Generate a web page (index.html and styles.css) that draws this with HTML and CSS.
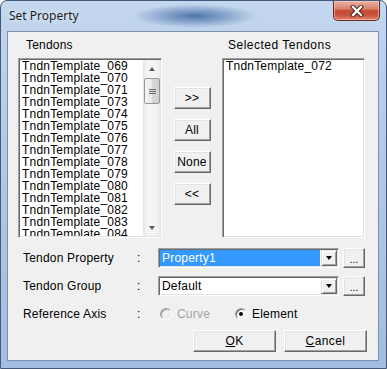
FILE: index.html
```html
<!DOCTYPE html>
<html lang="en">

<head>
    <meta charset="UTF-8" />
    <title>Set Property</title>
    <link rel="stylesheet" href="styles.css">
</head>

<body>
    <div class="window">
        <div class="titlebar">
            <span class="title">Set Property</span>
            <button type="button" class="close">
                <svg width="14" height="12" viewBox="0 0 14 12">
                    <path d="M3 2 L11 10 M11 2 L3 10" stroke="#3b1a16" stroke-width="4.2" stroke-linecap="square" fill="none" />
                    <path d="M3 2 L11 10 M11 2 L3 10" stroke="#fff" stroke-width="2.4" stroke-linecap="square" fill="none" />
                </svg>
            </button>
        </div>

        <div class="client">
            <div class="picker">
                <div class="pane">
                    <div class="caption caption-left">Tendons</div>
                    <div class="listbox">
                        <ul class="items">
                            <li>TndnTemplate_069</li>
                            <li>TndnTemplate_070</li>
                            <li>TndnTemplate_071</li>
                            <li>TndnTemplate_073</li>
                            <li>TndnTemplate_074</li>
                            <li>TndnTemplate_075</li>
                            <li>TndnTemplate_076</li>
                            <li>TndnTemplate_077</li>
                            <li>TndnTemplate_078</li>
                            <li>TndnTemplate_079</li>
                            <li>TndnTemplate_080</li>
                            <li>TndnTemplate_081</li>
                            <li>TndnTemplate_082</li>
                            <li>TndnTemplate_083</li>
                            <li>TndnTemplate_084</li>
                        </ul>
                        <div class="scrollbar">
                            <span class="arrow"><span class="tri-up"></span></span>
                            <span class="thumb"><span class="grip"></span></span>
                            <span class="track"></span>
                            <span class="arrow"><span class="tri-down"></span></span>
                        </div>
                    </div>
                </div>

                <div class="movers">
                    <button type="button" class="btn mover">&gt;&gt;</button>
                    <button type="button" class="btn mover">All</button>
                    <button type="button" class="btn mover">None</button>
                    <button type="button" class="btn mover">&lt;&lt;</button>
                </div>

                <div class="pane">
                    <div class="caption caption-right">Selected Tendons</div>
                    <div class="listbox">
                        <ul class="items">
                            <li>TndnTemplate_072</li>
                        </ul>
                    </div>
                </div>
            </div>

            <div class="form">
                <span class="label">Tendon Property</span>
                <span class="colon">:</span>
                <div class="combo">
                    <span class="combo-value selected">Property1</span>
                    <span class="drop"><span class="tri-down black"></span></span>
                </div>
                <button type="button" class="btn more">...</button>

                <span class="label">Tendon Group</span>
                <span class="colon">:</span>
                <div class="combo">
                    <span class="combo-value">Default</span>
                    <span class="drop"><span class="tri-down black"></span></span>
                </div>
                <button type="button" class="btn more">...</button>

                <span class="label">Reference Axis</span>
                <span class="colon">:</span>
                <div class="radios">
                    <span class="option option-first disabled"><span class="radio"></span>Curve</span>
                    <span class="option"><span class="radio checked"></span>Element</span>
                </div>
            </div>

            <div class="actions">
                <button type="button" class="btn action"><u>O</u>K</button>
                <button type="button" class="btn action"><u>C</u>ancel</button>
            </div>
        </div>
    </div>
</body>

</html>
```

FILE: styles.css
```css
* {
    box-sizing: border-box;
    margin: 0;
    padding: 0;
}

body {
    background: #fff;
    color: #000;
    font-family: "Liberation Sans", Arial, sans-serif;
    font-size: 12px;
    height: 369px;
    letter-spacing: 0.2px;
    overflow: hidden;
    width: 387px;
}

.window {
    background: linear-gradient(180deg, #c3d7ee 0%, #b2cae6 40%, #a3bde0 100%);
    border: 1px solid #43597a;
    border-radius: 7px 7px 0 0;
    display: flex;
    flex-direction: column;
    height: 369px;
    padding: 0 7px 7px 6px;
    width: 387px;
}

.titlebar {
    align-items: flex-start;
    background: radial-gradient(ellipse 62px 12px at 188px 15px, rgba(58, 98, 160, 0.85), rgba(58, 98, 160, 0) 100%);
    display: flex;
    height: 30px;
    justify-content: space-between;
    margin: 0 -1px 0 0;
}

.title {
    color: #1b1b1b;
    font-family: "Noto Sans", "Liberation Sans", sans-serif;
    letter-spacing: 0;
    line-height: 15px;
    padding: 7px 0 0 2px;
    text-shadow: 0 0 5px rgba(255, 255, 255, 0.9);
}

.close {
    align-items: center;
    background: linear-gradient(180deg, #e9b1a4 0%, #d8846f 40%, #c24a35 52%, #c9533d 75%, #e0866f 100%);
    border: 1px solid #6d2a20;
    border-top: none;
    border-radius: 0 0 5px 5px;
    box-shadow: inset 0 0 0 1px rgba(255, 220, 210, 0.5);
    display: flex;
    height: 20px;
    justify-content: center;
    width: 47px;
}

.client {
    background: #f0f0f0;
    border: 1px solid #7d91ad;
    display: flex;
    flex-direction: column;
    height: 330px;
}

/* lists and mover buttons */

.picker {
    display: grid;
    grid-template-columns: 144px 1fr 143px;
    padding: 6px 13px 0 10px;
}

.pane {
    display: flex;
    flex-direction: column;
}

.caption {
    height: 15px;
    line-height: 15px;
    margin-bottom: 5px;
}

.caption-left {
    padding-left: 8px;
}

.caption-right {
    padding-left: 6px;
    letter-spacing: 0.5px;
}

.listbox {
    background: #fff;
    border: 1px solid;
    border-color: #a0a0a0 #fff #fff #a0a0a0;
    box-shadow: inset 1px 1px 0 #696969, inset -1px -1px 0 #e3e3e3;
    display: flex;
    height: 180px;
    overflow: hidden;
    padding: 1px;
}

.items {
    flex: 1;
    list-style: none;
    overflow: hidden;
    padding: 0 0 0 2px;
}

.items li {
    height: 12px;
    line-height: 12px;
    white-space: nowrap;
}

.scrollbar {
    background: linear-gradient(90deg, #e6e6e6 0%, #f4f4f4 25%, #f4f4f4 75%, #ebebeb 100%);
    display: flex;
    flex-direction: column;
    width: 17px;
}

.arrow {
    align-items: center;
    display: flex;
    height: 17px;
    justify-content: center;
}

.tri-up {
    border-bottom: 4px solid #5a5a5a;
    border-left: 3.5px solid transparent;
    border-right: 3.5px solid transparent;
    height: 0;
    width: 0;
}

.tri-down {
    border-left: 3.5px solid transparent;
    border-right: 3.5px solid transparent;
    border-top: 4px solid #5a5a5a;
    height: 0;
    width: 0;
}

.tri-down.black {
    border-top-color: #000;
}

.thumb {
    align-items: center;
    background: linear-gradient(90deg, #f3f3f3 0%, #e9e9e9 50%, #d9d9d9 51%, #cfcfcf 100%);
    border: 1px solid #979797;
    border-radius: 2px;
    display: flex;
    height: 26px;
    justify-content: center;
    margin: 1px 0 0 1px;
}

.grip {
    border-bottom: 1px solid #6c6c6c;
    border-top: 1px solid #6c6c6c;
    height: 5px;
    position: relative;
    width: 7px;
}

.grip::after {
    border-top: 1px solid #6c6c6c;
    content: "";
    left: 0;
    position: absolute;
    right: 0;
    top: 1px;
}

.track {
    flex: 1;
}

.movers {
    align-items: center;
    display: flex;
    flex-direction: column;
    gap: 10px;
    padding-top: 49px;
}

/* classic 3D buttons */

.btn {
    background: #f0f0f0;
    border: 1px solid;
    border-color: #fff #696969 #696969 #fff;
    box-shadow: inset -1px -1px 0 #a0a0a0, inset 1px 1px 0 #e3e3e3;
    color: #000;
    font-family: inherit;
    font-size: 12px;
    letter-spacing: 0.2px;
}

.mover {
    height: 22px;
    width: 37px;
}

.more {
    height: 20px;
    justify-self: end;
    font-size: 10px;
    letter-spacing: 0;
    padding-top: 3px;
    width: 22px;
}

/* property rows */

.form {
    align-items: center;
    display: grid;
    grid-template-columns: 114px 21px 181px 26px;
    grid-template-rows: repeat(3, 20px);
    margin-top: 10px;
    padding-left: 15px;
    row-gap: 8px;
}

.label,
.colon {
    line-height: 14px;
}

.combo {
    background: #fff;
    border: 1px solid;
    border-color: #a0a0a0 #fff #fff #a0a0a0;
    box-shadow: inset 1px 1px 0 #696969, inset -1px -1px 0 #e3e3e3;
    display: flex;
    height: 20px;
    padding: 1px;
}

.combo-value {
    flex: 1;
    line-height: 16px;
    margin-right: 1px;
    padding-left: 2px;
}

.combo-value.selected {
    background: #3399ff;
    color: #fff;
}

.drop {
    align-items: center;
    background: #f0f0f0;
    border: 1px solid;
    border-color: #e3e3e3 #696969 #696969 #e3e3e3;
    box-shadow: inset 1px 1px 0 #fff, inset -1px -1px 0 #a0a0a0;
    display: flex;
    justify-content: center;
    width: 16px;
}

.radios {
    align-items: center;
    display: flex;
    grid-column: span 2;
    padding-left: 2px;
}

.option {
    align-items: center;
    display: flex;
    gap: 5px;
    line-height: 14px;
}

.option-first {
    width: 75px;
}

.option.disabled {
    color: #a3a3a3;
}

.radio {
    align-items: center;
    background: #fff;
    border: 1px solid;
    border-color: #a0a0a0 #fff #fff #a0a0a0;
    border-radius: 50%;
    box-shadow: inset 1px 1px 0 #696969, inset -1px -1px 0 #e3e3e3;
    display: flex;
    height: 12px;
    justify-content: center;
    width: 12px;
}

.disabled .radio {
    background: #f0f0f0;
    box-shadow: inset 1px 1px 0 #a0a0a0, inset -1px -1px 0 #e3e3e3;
}

.radio.checked::after {
    background: #000;
    border-radius: 50%;
    content: "";
    height: 4px;
    width: 4px;
}

/* ok / cancel */

.actions {
    display: flex;
    gap: 8px;
    justify-content: flex-end;
    margin-top: 6px;
    padding-right: 11px;
}

.action {
    height: 22px;
    letter-spacing: 0.4px;
    width: 83px;
}
```
